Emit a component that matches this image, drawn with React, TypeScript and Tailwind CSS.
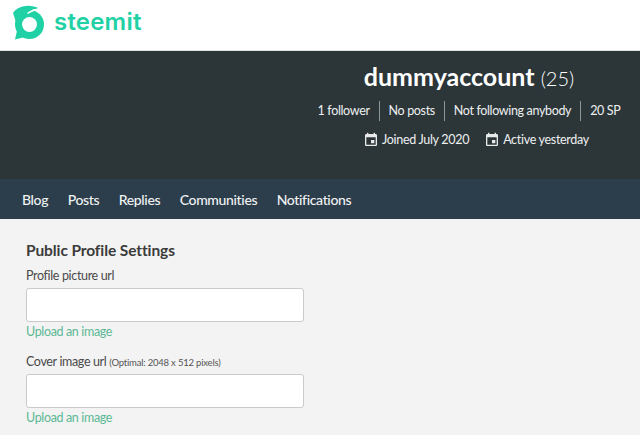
const SANS = "font-['Lato','Liberation_Sans',sans-serif]";

const STATS = ["1 follower", "No posts", "Not following anybody", "20 SP"];
const TABS = ["Blog", "Posts", "Replies", "Communities", "Notifications"];

function SteemitLogo() {
  return (
    <svg width="34" height="36" viewBox="0 0 34 36" className="shrink-0">
      <circle cx="17.5" cy="19.5" r="14.5" fill="#1fd1a4" />
      <path fill="#1fd1a4" d="M1 8 C 5 1 18 -2 27 3.5 C 22 4 18 5 15 8 L 5 20 Z" />
      <path fill="#1fd1a4" d="M5 26 L 3 34.5 L 13 32 Z" />
      <path fill="none" stroke="#ffffff" strokeWidth="1.6" d="M29 3.5 C 24 4.5 19 5.5 15.5 8.5" />
      <circle cx="17.5" cy="19.5" r="7.5" fill="#ffffff" />
    </svg>
  );
}

function CalendarIcon() {
  return (
    <svg width="16" height="16" viewBox="0 0 24 24" fill="#e8eaea" className="shrink-0">
      <path d="M17 12h-5v5h5v-5zM16 1v2H8V1H6v2H5c-1.11 0-1.99.9-1.99 2L3 19c0 1.1.89 2 2 2h14c1.1 0 2-.9 2-2V5c0-1.1-.9-2-2-2h-1V1h-2zm3 18H5V8h14v11z" />
    </svg>
  );
}

function UrlField({ children }: { children: React.ReactNode }) {
  return (
    <div>
      <div className="h-[24px] whitespace-nowrap text-[12.5px] leading-[24px] tracking-[-0.35px] text-[#4a4a4a]">{children}</div>
      <input className="block h-[34px] w-[278px] rounded-[3px] border border-[#cacaca] bg-white" />
      <a className="block h-[20px] text-[12.5px] leading-[20px] tracking-[-0.35px] text-[#5cb895]">Upload an image</a>
    </div>
  );
}

export default function App() {
  return (
    <div className={`h-[435px] w-[640px] overflow-hidden bg-[#f3f3f3] ${SANS}`}>
      <header className="flex h-[51px] items-start gap-[8px] border-b border-[#e0e4e4] bg-white pl-[12px] pt-[5px]">
        <SteemitLogo />
        <span className="font-['Inter',sans-serif] text-[24px] font-semibold leading-[34px] tracking-[0.2px] text-[#1fd1a4]">
          steemit
        </span>
      </header>

      <section className="h-[128px] bg-[#2c3639] pl-[310px] pr-[12px] text-center text-white">
        <h1 className="pt-[8px] text-[25px] font-bold leading-[34px]">
          dummyaccount <span className="text-[20px] font-light">(25)</span>
        </h1>
        <div className="mt-[6px] flex justify-center whitespace-nowrap text-[12.5px] leading-[20px] tracking-[-0.35px] text-[#eef0f0]">
          {STATS.map((s, i) => (
            <span key={s} className={i < 3 ? "mr-[9px] border-r border-[#8b9497] pr-[9px]" : ""}>
              {s}
            </span>
          ))}
        </div>
        <div className="mt-[9px] flex justify-center gap-[15px] whitespace-nowrap pl-[14px] text-[12.5px] leading-[20px] tracking-[-0.3px] text-[#eef0f0]">
          <span className="flex items-center gap-[3px]">
            <CalendarIcon />
            Joined July 2020
          </span>
          <span className="flex items-center gap-[3px]">
            <CalendarIcon />
            Active yesterday
          </span>
        </div>
      </section>

      <nav className="flex h-[40px] items-center gap-[19.5px] bg-[#2c3e4b] pl-[22px] text-[14px] font-medium tracking-[-0.35px] text-[#f0f2f3]">
        {TABS.map((t) => (
          <a key={t}>{t}</a>
        ))}
      </nav>

      <main className="pl-[26px] pt-[21px]">
        <h2 className="mb-[4px] text-[15.5px] font-bold leading-[20px] tracking-[-0.1px] text-[#3b3b3b]">Public Profile Settings</h2>
        <div className="flex flex-col gap-[8px]">
          <UrlField>Profile picture url</UrlField>
          <UrlField>
            Cover image url <span className="text-[9.5px] tracking-[-0.2px] text-[#555]">(Optimal: 2048 x 512 pixels)</span>
          </UrlField>
        </div>
      </main>
    </div>
  );
}
